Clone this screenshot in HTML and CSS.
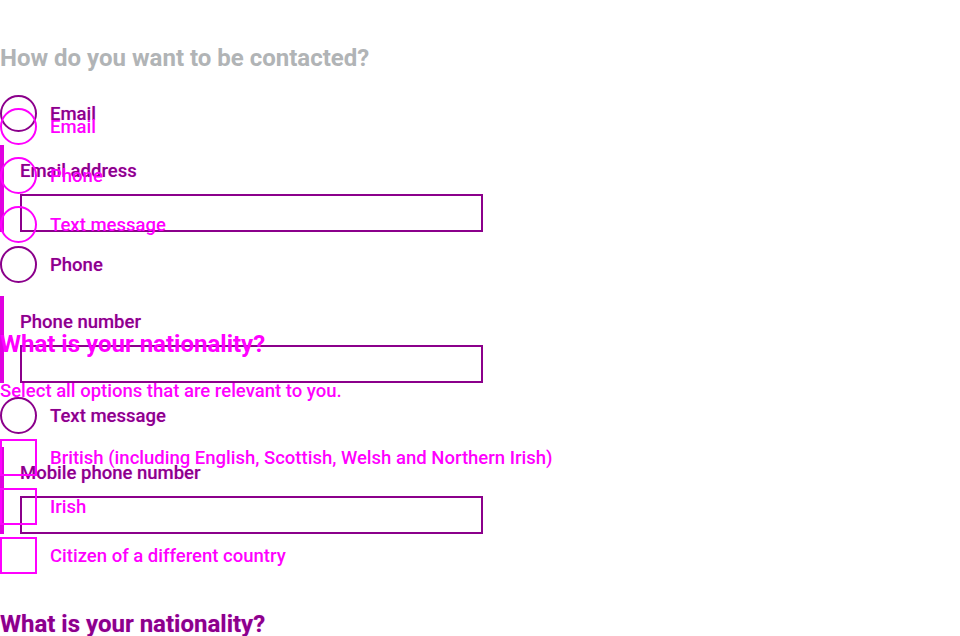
FILE: index.html
```html
<!DOCTYPE html>
<html lang="en">
<head>
<meta charset="utf-8">
<title>Contact preferences</title>
<link rel="stylesheet" href="styles.css">
</head>
<body>
<main class="stage">
  <div class="layer layer-a">
    <h1 class="heading-page">How do you want to be contacted?</h1>
    <div class="choices">
      <label class="choice"><span class="mark"></span><span class="choice-label">Email</span></label>
      <div class="reveal">
        <span class="field-label">Email address</span>
        <input class="field" type="text" aria-label="Email address">
      </div>
      <label class="choice"><span class="mark"></span><span class="choice-label">Phone</span></label>
      <div class="reveal">
        <span class="field-label">Phone number</span>
        <input class="field" type="text" aria-label="Phone number">
      </div>
      <label class="choice"><span class="mark"></span><span class="choice-label">Text message</span></label>
      <div class="reveal">
        <span class="field-label">Mobile phone number</span>
        <input class="field" type="text" aria-label="Mobile phone number">
      </div>
    </div>
    <h2 class="heading-section">What is your nationality?</h2>
  </div>

  <div class="layer layer-b">
    <div class="choices stack">
      <label class="choice"><span class="mark"></span><span class="choice-label">Email</span></label>
      <label class="choice"><span class="mark"></span><span class="choice-label">Phone</span></label>
      <label class="choice"><span class="mark"></span><span class="choice-label">Text message</span></label>
    </div>
    <h2 class="heading-section heading-b">What is your nationality?</h2>
    <p class="hint">Select all options that are relevant to you.</p>
    <div class="choices stack checks">
      <label class="choice"><span class="mark square"></span><span class="choice-label">British (including English, Scottish, Welsh and Northern Irish)</span></label>
      <label class="choice"><span class="mark square"></span><span class="choice-label">Irish</span></label>
      <label class="choice"><span class="mark square"></span><span class="choice-label">Citizen of a different country</span></label>
    </div>
  </div>
</main>
</body>
</html>
```
FILE: styles.css
```css
* {
  box-sizing: border-box;
}

html,
body {
  margin: 0;
  background: #ffffff;
}

body {
  font-family: Roboto, "Liberation Sans", sans-serif;
  width: 960px;
  height: 636px;
  overflow: hidden;
}

.stage {
  display: grid;
}

.layer {
  grid-area: 1 / 1;
  min-width: 0;
}

/* ---------- layer A (purple) ---------- */
.layer-a {
  padding-top: 43px;
  color: #8b008b;
  text-shadow: 0 0 1px rgba(255, 0, 255, 0.45);
}

.heading-page {
  margin: 0;
  font-size: 24px;
  line-height: 30px;
  font-weight: 700;
  color: #b1b4b6;
  text-shadow: none;
}

.layer-a .choices {
  margin-top: 22px;
}

.choice {
  display: flex;
  align-items: center;
  gap: 13px;
  height: 37px;
}

.mark {
  flex: none;
  width: 37px;
  height: 37px;
  border: 2px solid currentColor;
  border-radius: 50%;
}

.mark.square {
  border-radius: 0;
}

.choice-label {
  font-size: 18.5px;
  line-height: 24px;
  font-weight: 500;
  white-space: nowrap;
}

.reveal {
  margin: 13px 0 14px;
  height: 87px;
  padding: 14px 0 0 16px;
  border-left: 4px solid #e000e0;
}

.field-label {
  display: block;
  margin-bottom: 11px;
  font-size: 18.5px;
  line-height: 24px;
  font-weight: 500;
}

.field {
  display: block;
  width: 463px;
  height: 38px;
  margin: 0;
  padding: 0;
  border: 2px solid #8b008b;
  border-radius: 0;
  background: transparent;
  -webkit-appearance: none;
  appearance: none;
  outline: none;
}

.heading-section {
  margin: 75px 0 0;
  font-size: 24px;
  line-height: 30px;
  font-weight: 700;
}

/* ---------- layer B (magenta) ---------- */
.layer-b {
  padding-top: 108px;
  color: #ff00ff;
}

.stack {
  display: flex;
  flex-direction: column;
  gap: 12px;
}

.heading-b {
  margin-top: 86px;
}

.hint {
  margin: 20px 0 0;
  font-size: 18.5px;
  line-height: 24px;
  font-weight: 500;
}

.checks {
  margin-top: 36px;
}
```
